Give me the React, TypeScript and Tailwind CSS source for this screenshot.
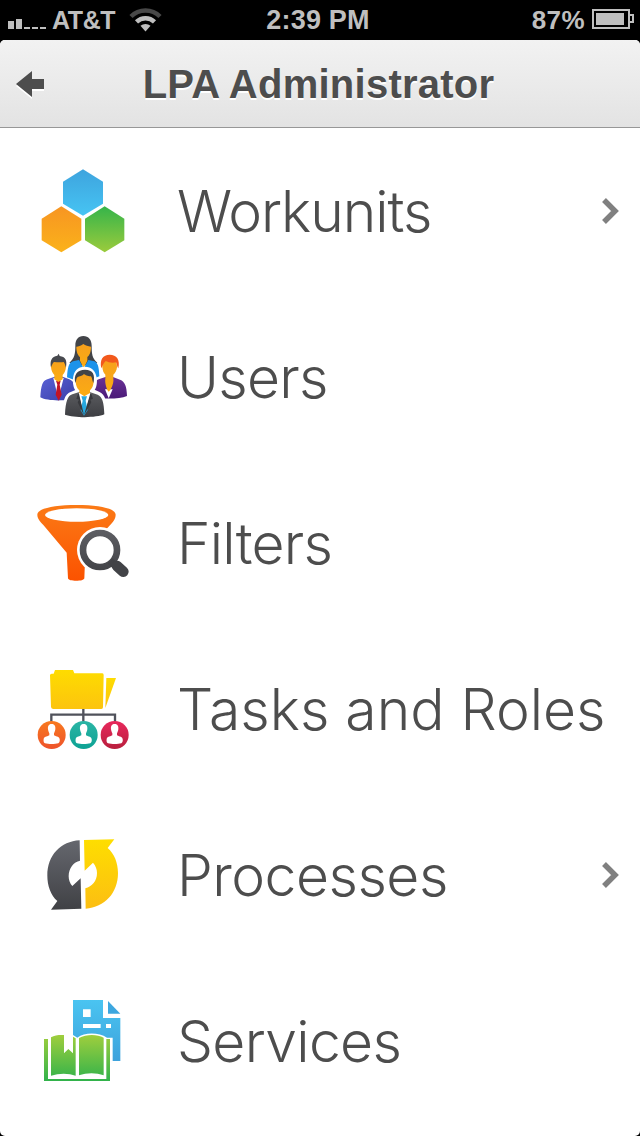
import type { ReactNode } from 'react'

function WorkunitsIcon() {
  return (
    <svg width="110" height="100" viewBox="0 3 330 300">
      <defs>
        <linearGradient id="hexBlue" x1="0" y1="0" x2="0" y2="1">
          <stop offset="0" stopColor="#3ea4de" />
          <stop offset="1" stopColor="#46c4f3" />
        </linearGradient>
        <linearGradient id="hexOrange" x1="0" y1="0" x2="0" y2="1">
          <stop offset="0" stopColor="#f79522" />
          <stop offset="1" stopColor="#fbb21a" />
        </linearGradient>
        <linearGradient id="hexGreen" x1="0" y1="0" x2="0" y2="1">
          <stop offset="0" stopColor="#35b44a" />
          <stop offset="1" stopColor="#9bcb3c" />
        </linearGradient>
      </defs>
      <path fill="url(#hexBlue)" d="M159 28l60 37v66l-60 36-60-36V65z" />
      <path fill="url(#hexOrange)" d="M94 139l60 37v65l-60 36-59-36v-65z" />
      <path fill="url(#hexGreen)" d="M224 139l59 37v65l-59 36-59-36v-65z" />
    </svg>
  )
}

function UsersIcon() {
  return (
    <svg width="110" height="100" viewBox="0 3 330 300">
      <defs>
        <linearGradient id="skin" x1="0" y1="0" x2="0" y2="1">
          <stop offset="0" stopColor="#f6a01c" />
          <stop offset="1" stopColor="#fbac12" />
        </linearGradient>
        <linearGradient id="suitBlue" x1="0" y1="0" x2="1" y2="1">
          <stop offset="0" stopColor="#5a62d6" />
          <stop offset="1" stopColor="#3a3fa8" />
        </linearGradient>
        <linearGradient id="suitPurple" x1="0" y1="0" x2="0" y2="1">
          <stop offset="0" stopColor="#6a3296" />
          <stop offset="1" stopColor="#4b1a78" />
        </linearGradient>
        <linearGradient id="suitGrey" x1="0" y1="0" x2="0" y2="1">
          <stop offset="0" stopColor="#5b5c60" />
          <stop offset="1" stopColor="#3d3e42" />
        </linearGradient>
      </defs>
      {/* back */}
      <path fill="#424448" d="M160 30c-16 0-24 12-24 29 0 22-2 38-18 51l26 8h34l24-8c-16-13-17-29-17-51 0-17-9-29-25-29z" />
      <path fill="#1c93ea" d="M111 154c2-30 5-44 18-48l18-4 14 25 14-25 18 4c11 4 14 18 15 45l-50 20z" />
      <path fill="url(#skin)" d="M160 54c-8 6-15 7-21 8 0 17 5 26 11 31v11l11 22 11-22V93c7-6 11-15 11-31-8-1-17-3-23-8z" />
      {/* left */}
      <path fill="url(#suitBlue)" d="M31 214c2-34 6-50 21-54l22-8h24l20 8c15 6 19 20 20 54-20 12-84 13-107 0z" />
      <path fill="#fff" d="M70 156l15 62 16-62z" />
      <path fill="#c31426" d="M78 164h14l-3 12 6 30-9 18-9-18 5-30z" />
      <path fill="url(#skin)" d="M85 96c-16 0-24 11-22 28 1 10 5 19 10 23v13l12 8 13-8v-13c5-5 9-13 10-23 1-17-8-28-23-28z" />
      <path fill="#47494e" d="M63 124c-4-20 2-32 19-35l4-6 3 7c17 2 23 13 19 34-3-6-3-11-7-16-10 2-21 0-29 0-5 4-6 10-9 16z" />
      {/* right */}
      <path fill="url(#suitPurple)" d="M186 212c2-34 6-48 20-52l20-7h23l21 8c15 6 20 19 21 49-25 10-74 10-105 2z" />
      <path fill="#fff" d="M225 190l11 27 12-27z" />
      <path fill="url(#skin)" d="M239 98c-15 0-23 10-22 26 1 10 4 18 9 22v13c-2 10 4 33 10 38 8-5 16-28 14-38v-13c6-5 10-12 11-22 1-16-7-26-22-26z" />
      <path fill="#f2591c" d="M214 127c-6-26 5-41 25-41 21 0 32 15 26 41-4-5-4-12-7-18-13 3-24-1-31-4-7 6-9 15-13 22z" />
      {/* front */}
      <path fill="#fff" d="M96 278c0-46 7-77 28-81l12-5c-10-12-16-70 28-70s41 58 30 69l13 6c20 7 25 33 24 78z" />
      <path fill="url(#suitGrey)" d="M105 266c2-40 8-57 22-61l21-7h31l24 8c14 6 19 23 20 59-23 11-90 11-118 1z" />
      <path fill="#fff" d="M144 200l18 66 22-66z" />
      <path fill="#27a8df" d="M154 211h17l-4 13 6 29-11 16-10-16 6-29z" />
      <path fill="#38393d" d="M146 199l16 69-19-39 4-8-8-3zM182 199l-20 69 22-39-3-8 8-3z" />
      <path fill="url(#skin)" d="M164 141c-19 0-28 10-27 27 1 12 5 20 11 25v8l15 10 17-10v-8c6-5 10-14 11-25 1-18-9-27-27-27z" />
      <path fill="#424448" d="M136 171c-6-25 6-40 29-40 24 0 31 15 25 40-4-6-2-13-7-20-12 0-16-4-21-7-5 7-14 7-19 9-5 5-4 12-7 18z" />
    </svg>
  )
}

function FiltersIcon() {
  return (
    <svg width="110" height="100" viewBox="0 3 330 300">
      <defs>
        <linearGradient id="funnel" x1="0" y1="0" x2="0" y2="1">
          <stop offset="0" stopColor="#fb7a16" />
          <stop offset="1" stopColor="#fb5200" />
        </linearGradient>
        <linearGradient id="lens" gradientUnits="userSpaceOnUse" x1="0" y1="115" x2="0" y2="255">
          <stop offset="0" stopColor="#5d5e63" />
          <stop offset="1" stopColor="#3f4044" />
        </linearGradient>
      </defs>
      <path
        fill="url(#funnel)"
        d="M140 39C70 39 22 50 22 68c0 12 8 20 18 31l70 83 4 77c0 10 49 10 49 0l3-79 80-87c7-9 11-16 11-25 0-18-47-29-117-29z"
      />
      <ellipse cx="140" cy="69" rx="95" ry="20" fill="#fff" />
      <circle cx="210" cy="174" r="69" fill="#fff" />
      <circle cx="210" cy="174" r="51" fill="none" stroke="url(#lens)" strokeWidth="20" />
      <path d="M240 207l26 22" stroke="#424347" strokeWidth="22" />
      <path d="M261 222l19 17" stroke="#424347" strokeWidth="32" strokeLinecap="round" />
    </svg>
  )
}

function TasksIcon() {
  const roles = [
    { x: 65, fill: 'url(#roleOrange)' },
    { x: 161, fill: 'url(#roleTeal)' },
    { x: 254, fill: 'url(#roleRed)' },
  ]

  return (
    <svg width="110" height="100" viewBox="0 -3 330 300">
      <defs>
        <linearGradient id="folder" x1="0" y1="0" x2="0" y2="1">
          <stop offset="0" stopColor="#fedc00" />
          <stop offset="1" stopColor="#fcc40e" />
        </linearGradient>
        <linearGradient id="roleOrange" x1="0" y1="0" x2="0" y2="1">
          <stop offset="0" stopColor="#f8791f" />
          <stop offset="1" stopColor="#ee532b" />
        </linearGradient>
        <linearGradient id="roleTeal" x1="0" y1="0" x2="0" y2="1">
          <stop offset="0" stopColor="#2bb5a5" />
          <stop offset="1" stopColor="#0da294" />
        </linearGradient>
        <linearGradient id="roleRed" x1="0" y1="0" x2="0" y2="1">
          <stop offset="0" stopColor="#e8285c" />
          <stop offset="1" stopColor="#b81f3d" />
        </linearGradient>
      </defs>
      <path fill="url(#folder)" d="M60 46q0-5 5-5h6l4-11h54l4 10h84q4 0 4 5l-2 97q0 5-5 5H70q-6 0-7-6z" />
      <path fill="url(#folder)" d="M229 54h29l-32 90z" />
      <path fill="none" stroke="#50525b" strokeWidth="7" d="M160 147v38M64 185v-21h191v21" />
      {roles.map((role) => (
        <g key={role.x} transform={`translate(${role.x} 225)`}>
          <circle r="42" fill={role.fill} />
          <path
            fill="#fff"
            d="M0-33c-10 0-12 8-11 16 1 7 3 10 4 12v6c-9 5-16 4-17 11-1 6 0 11 4 13 10 3 30 3 40 0 4-2 5-8 4-13C23 5 16 6 7 1v-6c1-2 3-5 4-12 1-8-1-16-11-16z"
          />
        </g>
      ))}
    </svg>
  )
}

function ProcessesIcon() {
  return (
    <svg width="110" height="100" viewBox="0 -3 330 300">
      <defs>
        <linearGradient id="arrowGrey" x1="0" y1="0" x2="0" y2="1">
          <stop offset="0" stopColor="#65676e" />
          <stop offset="1" stopColor="#404145" />
        </linearGradient>
        <linearGradient id="arrowYellow" x1="0" y1="0" x2="0" y2="1">
          <stop offset="0" stopColor="#fede00" />
          <stop offset="1" stopColor="#fcbe12" />
        </linearGradient>
      </defs>
      <path
        fill="url(#arrowGrey)"
        d="M149 43C92 46 52 88 52 149c0 29 10 58 30 76l-19 26 91-3-2-91-25 23c-7-7-11-18-11-29 0-25 15-43 34-47z"
      />
      <path
        fill="url(#arrowYellow)"
        d="M162 42l91-2-20 26c20 17 31 45 31 75 0 60-40 103-97 107l-1-61c20-5 35-22 35-46 0-11-4-22-12-31l-25 24z"
      />
    </svg>
  )
}

function ServicesIcon() {
  return (
    <svg width="110" height="100" viewBox="0 3 330 300">
      <defs>
        <linearGradient id="page" x1="0" y1="0" x2="0" y2="1">
          <stop offset="0" stopColor="#4ac4f1" />
          <stop offset="1" stopColor="#3da2dc" />
        </linearGradient>
        <linearGradient id="book" gradientUnits="userSpaceOnUse" x1="0" y1="135" x2="0" y2="273">
          <stop offset="0" stopColor="#9fce3d" />
          <stop offset="1" stopColor="#31b24b" />
        </linearGradient>
      </defs>
      <path
        fill="url(#page)"
        fillRule="evenodd"
        d="M129 30h90v54h52v129h-23v-70h-17c-25-16-66-17-89 0l-13-8zM159 58v23h23V58zM159 102v12h53v-12zM228 102v12h15v-12z"
      />
      <path fill="#3da7df" d="M234 33l37 38h-37z" />
      <g fill="url(#book)">
        <path d="M42 147h12v120h175V147h11v126H42z" />
        <path d="M63 142c11-7 27-8 39-7v55l13-13 14 13v-50l8 5v112c-21-8-50-8-74 0z" />
        <path d="M147 144c22-12 54-12 74-1v113c-22-8-51-8-74 0z" />
      </g>
    </svg>
  )
}

type MenuItem = {
  label: string
  icon: ReactNode
  tracking: string
  hasChildren?: boolean
}

const menuItems: MenuItem[] = [
  { label: 'Workunits', icon: <WorkunitsIcon />, tracking: 'tracking-[-1px]', hasChildren: true },
  { label: 'Users', icon: <UsersIcon />, tracking: 'tracking-[-0.7px]' },
  { label: 'Filters', icon: <FiltersIcon />, tracking: 'tracking-[-0.8px]' },
  { label: 'Tasks and Roles', icon: <TasksIcon />, tracking: 'tracking-normal' },
  { label: 'Processes', icon: <ProcessesIcon />, tracking: 'tracking-[-0.5px]', hasChildren: true },
  { label: 'Services', icon: <ServicesIcon />, tracking: 'tracking-[-0.7px]' },
]

function StatusBar() {
  return (
    <div className="grid h-10 grid-cols-3 items-center px-2 text-[27px] leading-10 font-bold text-[#bfbfbf]">
      <div className="flex items-center">
        <svg width="38" height="40" viewBox="0 0 38 40" fill="#bfbfbf">
          <path d="M0 21h6v8H0zM8 19h6v10H8zM16 27h6v2h-6zM24 27h6v2h-6zM32 27h6v2h-6z" />
        </svg>
        <span className="ml-1.5 text-[25px] tracking-[-0.4px]">AT&amp;T</span>
        <svg className="ml-3.5" width="34" height="40" viewBox="0 0 34 40" fill="none">
          <path d="M2 16.500a20.500 20.500 0 0 1 29 0" stroke="#484848" strokeWidth="4.500" />
          <path d="M7.500 21.800a13 13 0 0 1 18 0" stroke="#bfbfbf" strokeWidth="4.500" />
          <path d="M16.500 31.500l-5-5.700a7.500 7.500 0 0 1 10 0z" fill="#bfbfbf" />
        </svg>
      </div>
      <span className="-ml-1 text-center tracking-[0.2px]">2:39 PM</span>
      <div className="flex items-center justify-end">
        <span className="text-[26px] tracking-[0.4px]">87%</span>
        <svg className="ml-[7px] -mr-0.5" width="42" height="40" viewBox="0 0 42 40">
          <path
            fill="none"
            stroke="#bfbfbf"
            strokeWidth="2"
            d="M1 10h36v18H1zM38 15h3v7h-3"
          />
          <path fill="#bfbfbf" d="M4 13h28v12H4z" />
        </svg>
      </div>
    </div>
  )
}

export default function App() {
  return (
    <div className="flex h-[1136px] w-[640px] flex-col overflow-hidden bg-black font-['Liberation_Sans',Arial,sans-serif]">
      <StatusBar />

      <div className="flex flex-1 flex-col overflow-hidden rounded-[5px] bg-white">
        <header className="grid h-22 grid-cols-[64px_1fr_67px] items-center border-b border-[#979797] bg-linear-to-b from-[#f2f2f2] to-[#e3e3e3]">
          <svg className="ml-4" width="30" height="30" viewBox="0 0 30 30">
            <path fill="#fff" d="M0 17L16 4v8h12v10H16v8z" />
            <path fill="#4d4d4d" d="M0 15L16 2v8h12v10H16v8z" />
          </svg>
          <h1 className="text-center text-[40px] font-bold tracking-[0.25px] whitespace-nowrap text-[#4d4d4d] [text-shadow:0_2px_0_#fff]">
            LPA Administrator
          </h1>
        </header>

        <ul>
          {menuItems.map((item) => (
            <li key={item.label} className="flex h-[166px] items-center pr-5 pl-[30px]">
              {item.icon}
              <span
                className={`ml-[37px] flex-1 pt-0.5 font-['Inter','Liberation_Sans',sans-serif] text-[57px] font-light whitespace-nowrap text-[#4d4d4d] ${item.tracking}`}
              >
                {item.label}
              </span>
              {item.hasChildren && (
                <svg width="18" height="26" viewBox="0 0 18 26" fill="none">
                  <path d="M2 2l11 11L2 24" stroke="#808080" strokeWidth="5.500" />
                </svg>
              )}
            </li>
          ))}
        </ul>
      </div>
    </div>
  )
}
